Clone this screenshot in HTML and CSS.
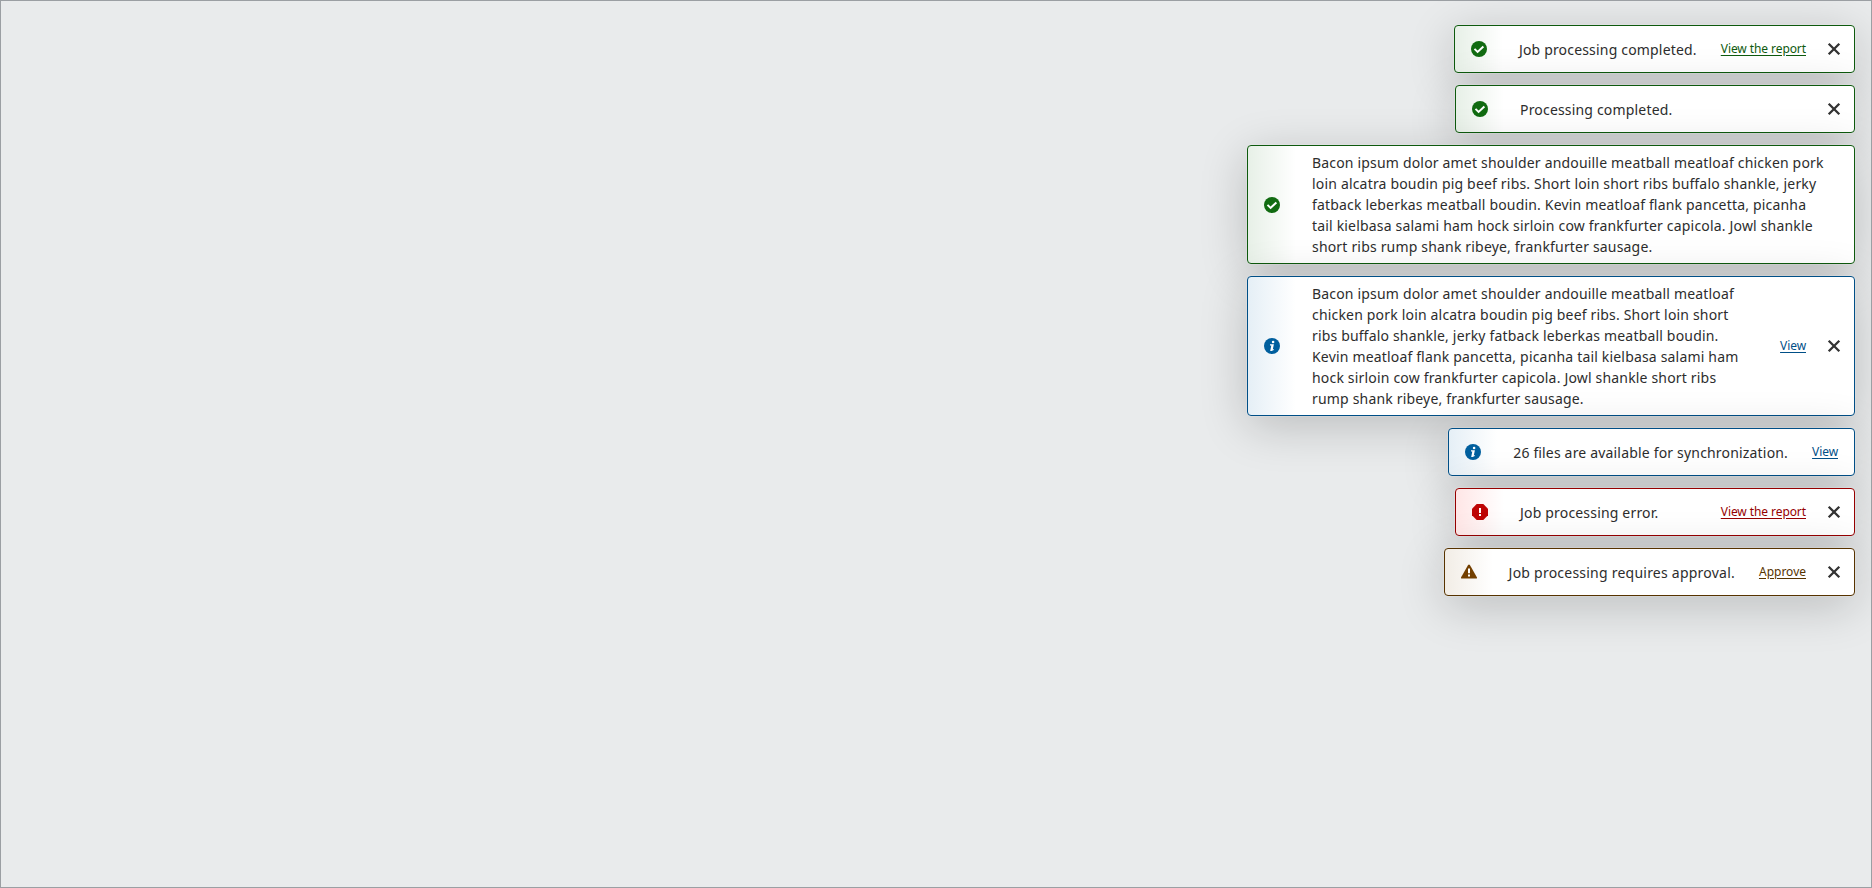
FILE: index.html
```
<!DOCTYPE html>
<html lang="en">
<head>
<meta charset="utf-8">
<title>Notifications</title>
<link rel="stylesheet" href="styles.css">
</head>
<body>
<svg class="defs" width="0" height="0" aria-hidden="true">
  <symbol id="ok" viewBox="0 0 16 16"><circle cx="8" cy="8" r="8" fill="currentColor"/><path d="M3.5 7.9l3.1 3 5.8-5.3" fill="none" stroke="#fff" stroke-width="2"/></symbol>
  <symbol id="info" viewBox="0 0 16 16"><circle cx="8" cy="8" r="8" fill="currentColor"/><circle cx="9.1" cy="4" r="1.3" fill="#fff"/><path d="M6 6.2h3.9L8.8 11.4l1-.4v.9L7.6 13H6.2L7.3 7.5H6z" fill="#fff"/></symbol>
  <symbol id="error" viewBox="0 0 16 16"><path d="M4.7 0h6.6L16 4.7v6.6L11.3 16H4.7L0 11.3V4.7z" fill="currentColor"/><path d="M7 4h2v5H7zM7 10h2v2H7z" fill="#fff"/></symbol>
  <symbol id="warning" viewBox="0 0 16 16"><path d="M7.1 1q.9-1 1.8 0L16 13.4q.2 1-.8 1.2H.8q-1-.2-.8-1.2z" fill="currentColor"/><path d="M7 4.6h2v4.6H7zM7 10.6h2v2H7z" fill="#fff"/></symbol>
  <symbol id="close" viewBox="0 0 16 16"><path d="M2.7 2.7l10.6 10.6M13.3 2.7L2.7 13.3" fill="none" stroke="currentColor" stroke-width="2.3"/></symbol>
</svg>
<main class="frame">
  <section class="toaster">
    <div class="toast success closable">
      <svg class="icon"><use href="#ok"/></svg>
      <p class="message">Job processing completed.</p>
      <a class="action" href="#">View the report</a>
      <button class="close" aria-label="Close"><svg><use href="#close"/></svg></button>
    </div>
    <div class="toast success closable">
      <svg class="icon"><use href="#ok"/></svg>
      <p class="message">Processing completed.</p>
      <button class="close" aria-label="Close"><svg><use href="#close"/></svg></button>
    </div>
    <div class="toast success long">
      <svg class="icon"><use href="#ok"/></svg>
      <p class="message">Bacon ipsum dolor amet shoulder andouille meatball meatloaf chicken pork loin alcatra boudin pig beef ribs. Short loin short ribs buffalo shankle, jerky fatback leberkas meatball boudin. Kevin meatloaf flank pancetta, picanha tail kielbasa salami ham hock sirloin cow frankfurter capicola. Jowl shankle short ribs rump shank ribeye, frankfurter sausage.</p>
    </div>
    <div class="toast info closable long">
      <svg class="icon"><use href="#info"/></svg>
      <p class="message">Bacon ipsum dolor amet shoulder andouille meatball meatloaf chicken pork loin alcatra boudin pig beef ribs. Short loin short ribs buffalo shankle, jerky fatback leberkas meatball boudin. Kevin meatloaf flank pancetta, picanha tail kielbasa salami ham hock sirloin cow frankfurter capicola. Jowl shankle short ribs rump shank ribeye, frankfurter sausage.</p>
      <a class="action" href="#">View</a>
      <button class="close" aria-label="Close"><svg><use href="#close"/></svg></button>
    </div>
    <div class="toast info">
      <svg class="icon"><use href="#info"/></svg>
      <p class="message">26 files are available for synchronization.</p>
      <a class="action" href="#">View</a>
    </div>
    <div class="toast error closable">
      <svg class="icon"><use href="#error"/></svg>
      <p class="message">Job processing error.</p>
      <a class="action" href="#">View the report</a>
      <button class="close" aria-label="Close"><svg><use href="#close"/></svg></button>
    </div>
    <div class="toast warning closable">
      <svg class="icon"><use href="#warning"/></svg>
      <p class="message">Job processing requires approval.</p>
      <a class="action" href="#">Approve</a>
      <button class="close" aria-label="Close"><svg><use href="#close"/></svg></button>
    </div>
  </section>
</main>
</body>
</html>
```
FILE: styles.css
```
* { box-sizing: border-box; }
body { margin: 0; font-family: "Noto Sans", sans-serif; }
.defs { display: none; }
.frame {
  height: 888px;
  border: 1px solid #9b9fa3;
  background: #e9ebec;
  padding: 24px 16px;
  overflow: hidden;
}
.toaster {
  display: flex;
  flex-direction: column;
  align-items: flex-end;
  gap: 12px;
}
.toast {
  display: flex;
  align-items: center;
  min-width: 400px;
  max-width: 608px;
  min-height: 48px;
  padding: 6px 16px;
  border: 1px solid var(--line);
  border-radius: 4px;
  background: linear-gradient(to right, var(--tint), #fff 48px);
  box-shadow: 0 0 0 1px rgba(255, 255, 255, .15), 0 10px 48px rgba(0, 0, 0, .2);
}
.closable { padding-right: 12px; }
.success { --line: #0e5a0e; --ink: #116b11; --tint: #e7f0e7; }
.info { --line: #004f87; --ink: #005f9e; --tint: #e5eff6; }
.error { --line: #960000; --ink: #be0404; --tint: #ffe6e6; }
.warning { --line: #573300; --ink: #733f00; --tint: #f2ede6; }
.icon { flex: none; width: 16px; height: 16px; margin-right: 32px; color: var(--ink); }
.message {
  flex: 1 1 auto;
  margin: 0;
  font-size: 14px;
  line-height: 21px;
  letter-spacing: .18px;
  font-feature-settings: "liga";
  color: #2d2d2d;
}
.long .message { padding-right: 11px; }
.warning .message { letter-spacing: .23px; }
.action {
  flex: none;
  margin-left: 24px;
  font-size: 12px;
  line-height: 18px;
  letter-spacing: -.08px;
  color: var(--line);
  text-underline-offset: 2px;
}
.warning .action { letter-spacing: 0; }
.close {
  flex: none;
  width: 16px;
  height: 16px;
  margin-left: 20px;
  padding: 0;
  border: 0;
  background: none;
  color: #333;
}
.close svg { display: block; width: 16px; height: 16px; }
```
